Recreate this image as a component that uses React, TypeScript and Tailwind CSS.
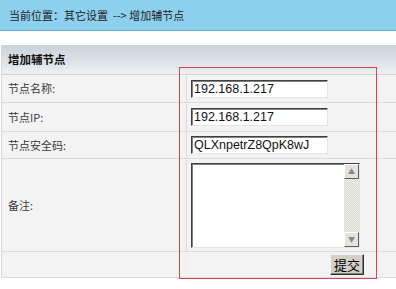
import React from "react";

const cjk = "font-['SimSun','Noto_Sans_CJK_SC',sans-serif]";

function Field({ value }: { value: string }) {
  return (
    <div className="w-[137px] h-[18px] bg-white border border-t-[#404040] border-l-[#404040] border-b-[#e4e4e4] border-r-[#e4e4e4] shadow-[inset_1px_1px_0_#808080] pl-[2px] text-[12.5px] leading-[16px] text-[#111] font-['Liberation_Sans',Arial,sans-serif] overflow-hidden whitespace-nowrap">
      {value}
    </div>
  );
}

function Row({
  label,
  h,
  children,
}: {
  label: string;
  h: string;
  children?: React.ReactNode;
}) {
  return (
    <div className={`flex border-b border-[#dcdcdc] ${h}`}>
      <div className="w-[185px] shrink-0 flex items-center pl-[6px] text-[11px] text-[#3a3a3a] border-r border-[#dcdcdc]">
        {label}
      </div>
      <div className="flex-1 flex items-center pl-[4px]">{children}</div>
    </div>
  );
}

export default function App() {
  return (
    <div className={`relative w-[396px] h-[289px] bg-white ${cjk}`}>
      <div className="h-[31px] bg-[#8dd0ee] border-b border-[#6cb3d4] flex items-center pl-[9px] text-[11px] text-[#222]">
        当前位置：其它设置 &nbsp;--&gt; 增加辅节点
      </div>

      <div className="mt-[14px] ml-[1px] border-l border-[#d8d8d8] bg-[#f3f3f3]">
        <div className="h-[30px] bg-[linear-gradient(#c9d1d9,#eef0f2)] border-b border-[#d4d4d4] flex items-center pl-[6px] text-[11.5px] font-bold text-[#111]">
          增加辅节点
        </div>
        <Row label="节点名称:" h="h-[28px]">
          <Field value="192.168.1.217" />
        </Row>
        <Row label="节点IP:" h="h-[29px]">
          <Field value="192.168.1.217" />
        </Row>
        <Row label="节点安全码:" h="h-[27px]">
          <Field value="QLXnpetrZ8QpK8wJ" />
        </Row>
        <Row label="备注:" h="h-[93px]">
          <div className="w-[169px] h-[85px] flex bg-white border border-t-[#404040] border-l-[#404040] border-b-[#e4e4e4] border-r-[#e4e4e4] shadow-[inset_1px_1px_0_#808080]">
            <div className="flex-1" />
            <div className="w-[15px] flex flex-col bg-[conic-gradient(#d6d6ce_25%,#f2f2ee_0_50%,#d6d6ce_0_75%,#f2f2ee_0)] bg-[length:2px_2px]">
              <div className="h-[15px] bg-[#e4e4dc] border border-t-white border-l-white border-b-[#606060] border-r-[#606060] flex items-center justify-center text-[7px] leading-none text-[#888]">
                ▲
              </div>
              <div className="flex-1" />
              <div className="h-[15px] bg-[#e4e4dc] border border-t-white border-l-white border-b-[#606060] border-r-[#606060] flex items-center justify-center text-[7px] leading-none text-[#888]">
                ▼
              </div>
            </div>
          </div>
        </Row>
        <div className="h-[26px] flex justify-end items-center pr-[32px] border-b border-[#dcdcdc]">
          <button className="w-[34px] h-[21px] bg-[#d4d0c8] border border-t-[#f4f4f4] border-l-[#f4f4f4] border-b-[#303030] border-r-[#303030] shadow-[inset_-1px_-1px_0_#808080] text-[13px] leading-none text-black">
            提交
          </button>
        </div>
      </div>

      <div className="absolute left-[179px] top-[67px] w-[198px] h-[212px] border border-[#d9434f] pointer-events-none" />
    </div>
  );
}
